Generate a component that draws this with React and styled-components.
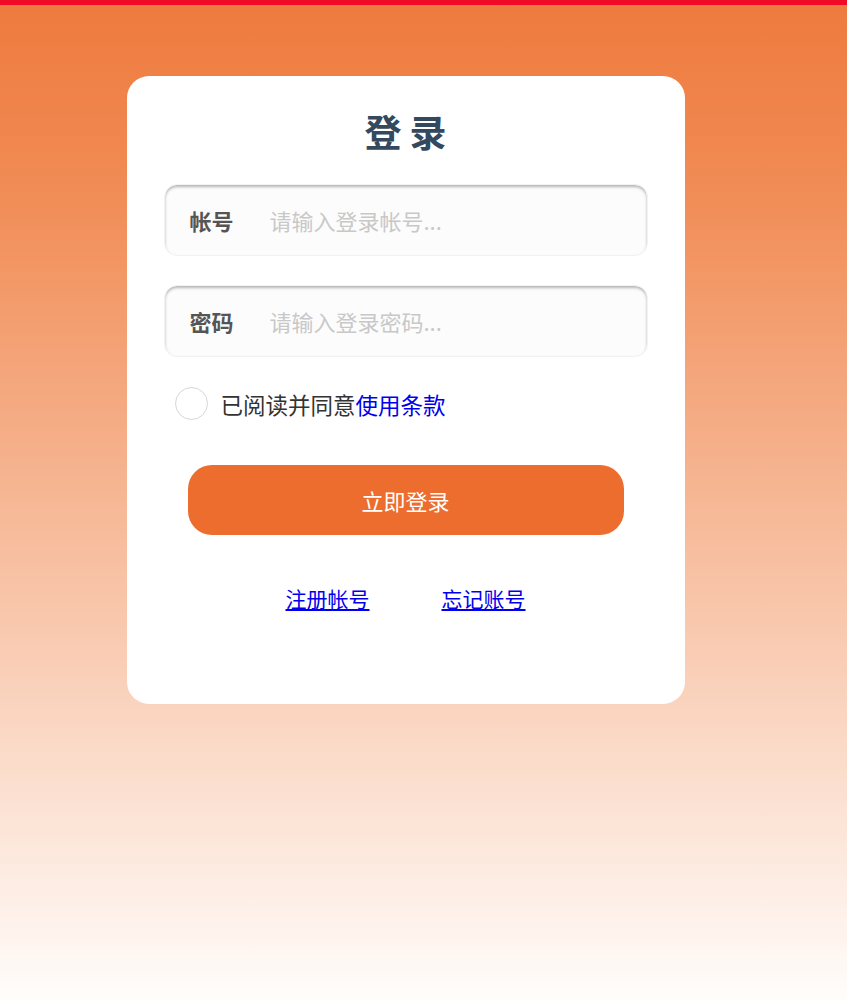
import React, { useState } from "react";
import styled, { createGlobalStyle } from "styled-components";

const Global = createGlobalStyle`
  html, body { margin: 0; padding: 0; }
  body {
    font-family: "Noto Sans CJK SC", "Noto Sans", sans-serif;
    min-height: 1000px;
    background: linear-gradient(180deg, #ee7a3d 0%, #f18d57 20%, #fffdfb 100%);
  }
  * { box-sizing: border-box; }
`;

const Page = styled.div`
  min-height: 1000px;
  border-top: 5px solid #f00a28;
  padding-top: 71px;
  display: flex;
  justify-content: center;
  padding-right: 36px;
`;

const Card = styled.div`
  width: 558px;
  height: 628px;
  background: #fff;
  border-radius: 22px;
  padding: 27px 37px 0;
  display: flex;
  flex-direction: column;
  align-items: center;
`;

const Title = styled.h1`
  margin: 0;
  font-size: 37px;
  font-weight: 700;
  color: #34495e;
  letter-spacing: 8px;
  text-indent: 8px;
  line-height: 56px;
`;

const Field = styled.label`
  width: 484px;
  height: 72px;
  margin-top: ${(p) => p.$mt}px;
  border-radius: 13px;
  background: #fcfcfc;
  box-shadow: inset 0 2px 3px rgba(0, 0, 0, 0.28);
  border: 1px solid #f2f2f2;
  display: flex;
  align-items: center;
  padding-left: 25px;
`;

const FieldLabel = styled.span`
  font-size: 22px;
  font-weight: 700;
  color: #555;
  width: 80px;
  flex-shrink: 0;
`;

const Input = styled.input`
  flex: 1;
  border: none;
  outline: none;
  background: transparent;
  font-family: inherit;
  font-size: 22px;
  color: #333;
  padding: 0;
  &::placeholder { color: #c8c8c8; }
`;

const AgreeRow = styled.label`
  align-self: flex-start;
  margin-top: 30px;
  margin-left: 11px;
  display: flex;
  align-items: center;
  gap: 13px;
  font-size: 22.5px;
  color: #333;
  cursor: pointer;
`;

const Circle = styled.span`
  width: 33px;
  height: 33px;
  border-radius: 50%;
  border: 1px solid #d6d6d6;
  background: ${(p) => (p.$on ? "#ec6d2d" : "#fff")};
`;

const Terms = styled.a`
  color: #0000ee;
  text-decoration: none;
`;

const Button = styled.button`
  margin-top: 45px;
  width: 436px;
  height: 70px;
  border: none;
  border-radius: 24px;
  background: #ec6d2d;
  color: #fff;
  font-family: inherit;
  font-size: 22px;
  cursor: pointer;
`;

const Links = styled.div`
  margin-top: 48px;
  display: flex;
  gap: 72px;
`;

const Link = styled.a`
  color: #0000ee;
  font-size: 21px;
  text-decoration: underline;
  line-height: 30px;
`;

export default function App() {
  const [on, setOn] = useState(false);
  return (
    <>
      <Global />
      <Page>
        <Card>
          <Title>登录</Title>
          <Field $mt={25}>
            <FieldLabel>帐号</FieldLabel>
            <Input placeholder="请输入登录帐号..." />
          </Field>
          <Field $mt={29}>
            <FieldLabel>密码</FieldLabel>
            <Input type="password" placeholder="请输入登录密码..." />
          </Field>
          <AgreeRow onClick={() => setOn(!on)}>
            <Circle $on={on} />
            <span>
              已阅读并同意<Terms href="#">使用条款</Terms>
            </span>
          </AgreeRow>
          <Button>立即登录</Button>
          <Links>
            <Link href="#">注册帐号</Link>
            <Link href="#">忘记账号</Link>
          </Links>
        </Card>
      </Page>
    </>
  );
}
